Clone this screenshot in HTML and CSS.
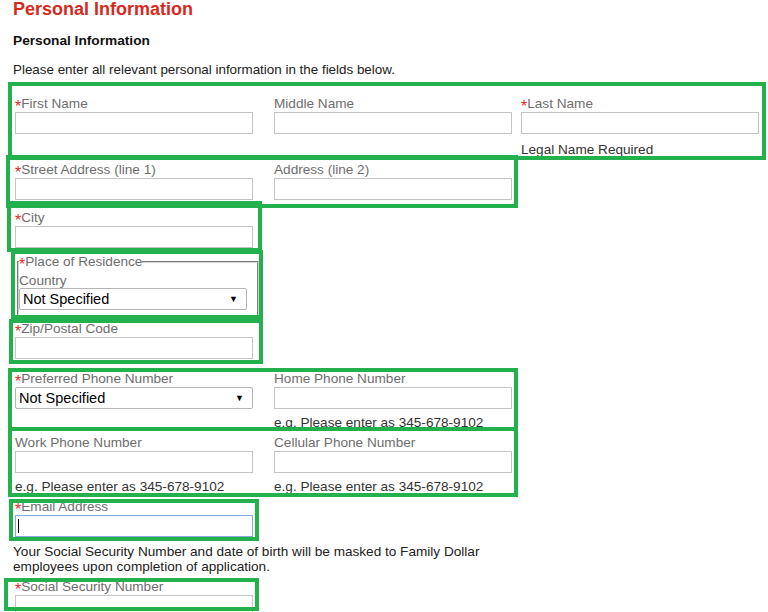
FILE: index.html
```html
<!DOCTYPE html>
<html lang="en">
<head>
    <meta charset="UTF-8">
    <meta name="viewport" content="width=device-width, initial-scale=1.0">
    <title>Personal Information</title>
    <link rel="stylesheet" href="styles.css">
</head>
<body>
    <div class="page">
        <h1 class="title">Personal Information</h1>
        <h2 class="subtitle">Personal Information</h2>
        <p class="intro">Please enter all relevant personal information in the fields below.</p>

        <form class="form">
            <div class="row-name">
                <div class="field">
                    <label><span class="req">*</span>First Name</label>
                    <input type="text">
                </div>
                <div class="field">
                    <label>Middle Name</label>
                    <input type="text">
                </div>
                <div class="field">
                    <label><span class="req">*</span>Last Name</label>
                    <input type="text">
                    <p class="hint legal">Legal Name Required</p>
                </div>
            </div>

            <div class="row-two address">
                <div class="field">
                    <label><span class="req">*</span>Street Address (line 1)</label>
                    <input type="text">
                </div>
                <div class="field">
                    <label>Address (line 2)</label>
                    <input type="text">
                </div>
            </div>

            <div class="field single city">
                <label><span class="req">*</span>City</label>
                <input type="text">
            </div>

            <fieldset class="residence">
                <legend><span class="req">*</span>Place of Residence</legend>
                <label class="country-label">Country</label>
                <div class="select-wrap country">
                    <select><option>Not Specified</option></select>
                    <span class="arrow">&#9660;</span>
                </div>
            </fieldset>

            <div class="field single zip">
                <label><span class="req">*</span>Zip/Postal Code</label>
                <input type="text">
            </div>

            <div class="row-two phone-a">
                <div class="field">
                    <label><span class="req">*</span>Preferred Phone Number</label>
                    <div class="select-wrap">
                        <select><option>Not Specified</option></select>
                        <span class="arrow">&#9660;</span>
                    </div>
                </div>
                <div class="field">
                    <label>Home Phone Number</label>
                    <input type="text">
                    <p class="hint">e.g. Please enter as 345-678-9102</p>
                </div>
            </div>

            <div class="row-two phone-b">
                <div class="field">
                    <label>Work Phone Number</label>
                    <input type="text">
                    <p class="hint">e.g. Please enter as 345-678-9102</p>
                </div>
                <div class="field">
                    <label>Cellular Phone Number</label>
                    <input type="text">
                    <p class="hint">e.g. Please enter as 345-678-9102</p>
                </div>
            </div>

            <div class="field single email">
                <label><span class="req">*</span>Email Address</label>
                <input type="text" class="focused">
                <span class="caret"></span>
            </div>

            <p class="notice">Your Social Security Number and date of birth will be masked to Family Dollar employees upon completion of application.</p>

            <div class="field single ssn">
                <label><span class="req">*</span>Social Security Number</label>
                <input type="text">
            </div>
        </form>

        <!-- green highlight boxes drawn over the form -->
        <div class="mark mark-name"></div>
        <div class="mark mark-address"></div>
        <div class="mark mark-city"></div>
        <div class="mark mark-residence"></div>
        <div class="mark mark-zip"></div>
        <div class="mark mark-phone-a"></div>
        <div class="mark mark-phone-b"></div>
        <div class="mark mark-email"></div>
        <div class="mark mark-ssn"></div>
    </div>
</body>
</html>
```

FILE: styles.css
```css
body {
    margin: 0;
    background: #fff;
    font-family: "Liberation Sans", Arial, sans-serif;
    overflow: hidden;
}

.page {
    position: relative;
    height: 612px;
    padding: 0 0 0 13px;
}

.title {
    margin: 0;
    font-size: 18px;
    line-height: 18px;
    font-weight: bold;
    color: #d52b1e;
}

.subtitle {
    margin: 15px 0 0;
    font-size: 13.7px;
    line-height: 16px;
    font-weight: bold;
    color: #111;
}

.intro {
    margin: 13px 0 0;
    font-size: 13.4px;
    line-height: 16px;
    color: #222;
}

.form {
    padding-left: 2px;
    margin-top: 18px;
    font-size: 13.6px;
}

.field {
    display: flex;
    flex-direction: column;
    width: 238px;
}

.field label {
    line-height: 16px;
    color: #6e6e6e;
}

.req {
    position: relative;
    top: 4px;
    font-size: 16px;
    line-height: 0;
    color: #f0252a;
}

input {
    box-sizing: border-box;
    width: 238px;
    height: 22px;
    margin: 0;
    border: 1px solid #c4c4c4;
    background: #fff;
    font-family: inherit;
}

input.focused {
    border-color: #86a9dc;
    outline: none;
}

.hint {
    margin: 6px 0 0;
    line-height: 16px;
    color: #333;
}

.row-name {
    display: grid;
    grid-template-columns: 259px 247px 247px;
}

.legal {
    margin-top: 8px;
}

.row-two {
    display: grid;
    grid-template-columns: 259px 247px;
}

.address {
    margin-top: 4px;
}

.city {
    margin-top: 10px;
}

.residence {
    box-sizing: border-box;
    width: 242px;
    height: 63px;
    margin: 6px 0 0 2px;
    padding: 0;
    border: 2px groove #d0d0d0;
}

.residence legend {
    padding: 0;
    line-height: 16px;
    color: #6e6e6e;
}

.country-label {
    display: block;
    line-height: 14px;
    margin-top: 4px;
    color: #6e6e6e;
}

.select-wrap {
    position: relative;
    width: 238px;
    height: 22px;
}

.select-wrap.country {
    width: 228px;
}

select {
    -webkit-appearance: none;
    appearance: none;
    box-sizing: border-box;
    width: 100%;
    height: 22px;
    margin: 0;
    padding: 0 0 0 3px;
    border: 1px solid #b5b5b5;
    border-radius: 2px;
    background: #fff;
    color: #000;
    font-family: inherit;
    font-size: 14.5px;
}

.arrow {
    position: absolute;
    right: 9px;
    top: 6px;
    font-size: 9px;
    line-height: 10px;
    color: #000;
    pointer-events: none;
}

.zip {
    margin-top: 4px;
}

.phone-a {
    margin-top: 12px;
}

.phone-b {
    margin-top: 4px;
}

.email {
    position: relative;
    margin-top: 4px;
}

.caret {
    position: absolute;
    left: 3px;
    top: 20px;
    width: 1px;
    height: 14px;
    background: #000;
}

.notice {
    width: 500px;
    margin: 7px 0 0 -2px;
    line-height: 15px;
    color: #222;
}

.ssn {
    margin-top: 5px;
}

/* annotation boxes */
.mark {
    position: absolute;
    box-sizing: border-box;
    border: 4px solid #22b14c;
    pointer-events: none;
}

.mark-name { left: 8px; top: 82px; width: 758px; height: 78px; }
.mark-address { left: 6px; top: 155px; width: 512px; height: 53px; }
.mark-city { left: 7px; top: 201px; width: 255px; height: 51px; }
.mark-residence { left: 11px; top: 250px; width: 252px; height: 69px; }
.mark-zip { left: 9px; top: 319px; width: 254px; height: 45px; }
.mark-phone-a { left: 8px; top: 368px; width: 510px; height: 63px; }
.mark-phone-b { left: 8px; top: 427px; width: 510px; height: 70px; }
.mark-email { left: 9px; top: 499px; width: 250px; height: 42px; }
.mark-ssn { left: 4px; top: 578px; width: 255px; height: 33px; }
```
